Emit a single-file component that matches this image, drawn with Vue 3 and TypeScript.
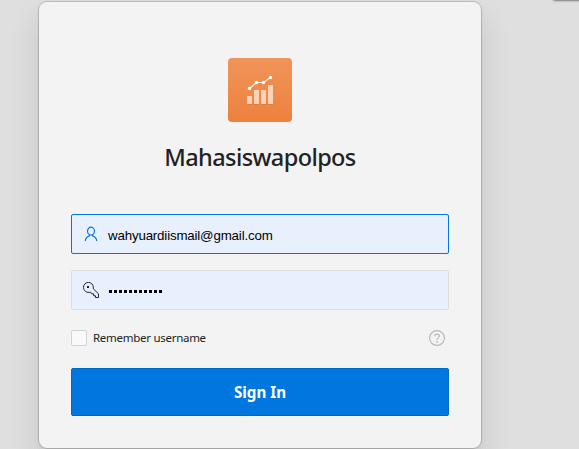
<script setup lang="ts">
import { ref } from 'vue'

const username = ref<string>('wahyuardiismail@gmail.com')
const password = ref<string>('•'.repeat(11))
const remember = ref<boolean>(false)
const dots = Array.from(password.value)
</script>

<template>
  <main class="page">
    <div class="corner"></div>
    <form class="card" @submit.prevent>
      <div class="logo">
        <svg width="64" height="64" viewBox="0 0 64 64">
          <g fill="#fff" fill-opacity=".62">
            <rect x="19" y="38" width="5" height="8" />
            <rect x="26" y="32" width="5" height="14" />
            <rect x="33" y="32" width="5" height="14" />
            <rect x="40" y="27" width="5" height="19" />
          </g>
          <path d="M19 46.5h5M26 46.5h5M33 46.5h5M40 46.5h5" stroke="#b95f28" stroke-opacity=".3" />
          <path d="M21.5 30.5 28.5 24.5H35.5L42.5 19.5" fill="none" stroke="#fff" stroke-width="1.2" stroke-opacity=".9" />
          <g fill="#fff">
            <circle cx="21.5" cy="30.5" r="1.7" />
            <circle cx="28.5" cy="24.5" r="1.7" />
            <circle cx="35.5" cy="24.5" r="1.7" />
            <circle cx="42.5" cy="19.5" r="1.7" />
          </g>
        </svg>
      </div>
      <h1 class="title">Mahasiswapolpos</h1>

      <div class="field focused">
        <svg class="icon" width="16" height="16" viewBox="0 0 16 16" fill="none" stroke="#0076df" stroke-width="1.2">
          <ellipse cx="8" cy="5.1" rx="3.5" ry="4" />
          <path d="M6.3 8.7v1.3C4 10.7 2.5 11.4 2.3 15M9.7 8.7v1.3c2.3.7 3.8 1.4 4 5" />
        </svg>
        <span class="value">{{ username }}</span>
      </div>

      <div class="field secret">
        <svg class="icon" width="16" height="16" viewBox="0 0 16 16" fill="none" stroke="#222">
          <path d="M10.3 6.8 15.5 11.8v3.7h-3v-1.7h-1.8v-2H8.6L7.6 10.1C4 11.3.5 8.9.5 5.4a4.9 4.9 0 0 1 9.8-.2z" />
          <rect x="4" y="4" width="2" height="2" fill="#222" stroke="none" />
        </svg>
        <span class="dots"><i v-for="(_, i) in dots" :key="i"></i></span>
      </div>

      <div class="options">
        <label class="remember" @click="remember = !remember">
          <span class="box" :class="{ on: remember }"></span>
          <span class="label">Remember username</span>
        </label>
        <svg class="help" width="16" height="16" viewBox="0 0 16 16" fill="none" stroke="#b9b9b9" stroke-width="1.15">
          <circle cx="8" cy="8" r="7.4" />
          <path d="M5.6 6.2C5.6 3.4 10.4 3.4 10.4 6.1 10.4 7.9 8 7.8 8 10" />
          <path d="M8 11v1.5" stroke-width="1.7" />
        </svg>
      </div>

      <button class="submit" type="submit">Sign In</button>
    </form>
  </main>
</template>

<style>
body {
  background: #dfdfdf;
}
</style>

<style scoped>
.page {
  position: relative;
  box-sizing: border-box;
  width: 579px;
  height: 449px;
  padding: 2px 0 0 39px;
  overflow: hidden;
  background: #dfdfdf;
  font-family: "Noto Sans", "Open Sans", sans-serif;
  color: #222;
}
.corner {
  position: absolute;
  top: -20px;
  left: 552px;
  width: 60px;
  height: 20px;
  border-radius: 4px;
  box-shadow: 0 1px 2px rgba(0, 0, 0, 0.45);
}
.card {
  box-sizing: border-box;
  display: flex;
  flex-direction: column;
  width: 442px;
  height: 446px;
  padding: 56px 32px 32px;
  border-radius: 8px;
  background: #f3f3f3;
  box-shadow: 0 0 0 1px rgba(0, 0, 0, 0.15), 0 16px 32px rgba(0, 0, 0, 0.12), 0 2px 4px rgba(0, 0, 0, 0.05);
}
.logo {
  align-self: center;
  width: 64px;
  height: 64px;
  border-radius: 4px;
  background: linear-gradient(#f0945a, #ed813e);
}
.logo svg {
  display: block;
}
.title {
  margin: 17px 0 0;
  height: 36px;
  line-height: 36px;
  text-align: center;
  white-space: nowrap;
  font-family: "Noto Sans", sans-serif;
  font-size: 23.5px;
  font-weight: 500;
  letter-spacing: -0.6px;
}
.field {
  box-sizing: border-box;
  display: flex;
  align-items: center;
  height: 40px;
  margin-top: 16px;
  padding: 0 11px;
  border: 1px solid #dedede;
  border-radius: 2px;
  background: #e8f0fe;
}
.focused {
  margin-top: 39px;
  border-color: #0076df;
}
.icon {
  flex: none;
}
.value {
  margin-left: 9px;
  padding-top: 2px;
  color: #000;
  font-family: "Liberation Sans", Arial, sans-serif;
  font-size: 13.33px;
  letter-spacing: -0.18px;
}
.dots {
  display: flex;
  gap: 2px;
  margin: 2px 0 0 10px;
}
.dots i {
  width: 3px;
  height: 3px;
  background: #000;
}
.options {
  display: flex;
  align-items: center;
  justify-content: space-between;
  height: 16px;
  margin-top: 20px;
  padding-right: 4px;
}
.remember {
  display: flex;
  align-items: center;
}
.box {
  box-sizing: border-box;
  width: 16px;
  height: 16px;
  border: 1px solid #d3d3d3;
  border-radius: 2px;
  background: #f9f9f9;
}
.box.on {
  background: #0076df;
}
.label {
  margin-left: 6px;
  font-size: 11.5px;
  line-height: 16px;
  letter-spacing: -0.28px;
  white-space: nowrap;
}
.submit {
  height: 48px;
  margin-top: 22px;
  padding: 0;
  border: 1px solid #0069c6;
  border-radius: 2px;
  background: #0076df;
  color: #fff;
  font-family: "Noto Sans", sans-serif;
  font-size: 15.2px;
  font-weight: 700;
}
</style>
